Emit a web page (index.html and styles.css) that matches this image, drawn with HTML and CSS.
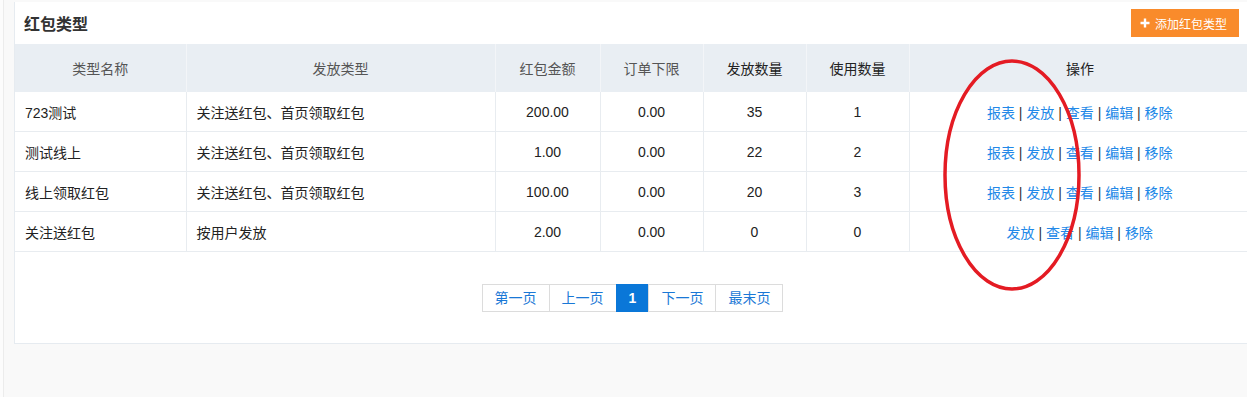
FILE: index.html
```html
<!DOCTYPE html>
<html lang="zh-CN">
<head>
  <meta charset="UTF-8">
  <title>红包类型</title>
  <link rel="stylesheet" href="styles.css">
</head>
<body>
  <div class="layout">
    <div class="side"></div>

    <div class="main">
      <div class="panel">
        <div class="panel-head">
          <h2>红包类型</h2>
          <a class="add-button" href="#">
            <svg width="10" height="10" viewBox="0 0 10 10"><path d="M5 0.5V9.5M0.5 5H9.5" stroke="#fff" stroke-width="2.4"/></svg>
            添加红包类型
          </a>
        </div>

        <table class="list">
          <colgroup>
            <col style="width: 171px">
            <col style="width: 309px">
            <col style="width: 105px">
            <col style="width: 103px">
            <col style="width: 103px">
            <col style="width: 103px">
            <col>
          </colgroup>
          <thead>
            <tr>
              <th class="light">类型名称</th>
              <th class="light">发放类型</th>
              <th class="light">红包金额</th>
              <th class="light">订单下限</th>
              <th>发放数量</th>
              <th>使用数量</th>
              <th>操作</th>
            </tr>
          </thead>
          <tbody>
            <tr>
              <td class="left">723测试</td>
              <td class="left">关注送红包、首页领取红包</td>
              <td>200.00</td>
              <td>0.00</td>
              <td>35</td>
              <td>1</td>
              <td class="ops"><a href="#">报表</a> | <a href="#">发放</a> | <a href="#">查看</a> | <a href="#">编辑</a> | <a href="#">移除</a></td>
            </tr>
            <tr>
              <td class="left">测试线上</td>
              <td class="left">关注送红包、首页领取红包</td>
              <td>1.00</td>
              <td>0.00</td>
              <td>22</td>
              <td>2</td>
              <td class="ops"><a href="#">报表</a> | <a href="#">发放</a> | <a href="#">查看</a> | <a href="#">编辑</a> | <a href="#">移除</a></td>
            </tr>
            <tr>
              <td class="left">线上领取红包</td>
              <td class="left">关注送红包、首页领取红包</td>
              <td>100.00</td>
              <td>0.00</td>
              <td>20</td>
              <td>3</td>
              <td class="ops"><a href="#">报表</a> | <a href="#">发放</a> | <a href="#">查看</a> | <a href="#">编辑</a> | <a href="#">移除</a></td>
            </tr>
            <tr>
              <td class="left">关注送红包</td>
              <td class="left">按用户发放</td>
              <td>2.00</td>
              <td>0.00</td>
              <td>0</td>
              <td>0</td>
              <td class="ops"><a href="#">发放</a> | <a href="#">查看</a> | <a href="#">编辑</a> | <a href="#">移除</a></td>
            </tr>
          </tbody>
        </table>

        <div class="pager">
          <a href="#">第一页</a>
          <a href="#">上一页</a>
          <a href="#" class="current">1</a>
          <a href="#">下一页</a>
          <a href="#">最末页</a>
        </div>
      </div>
    </div>
  </div>

  <!-- hand-drawn mark over the actions column -->
  <svg class="mark" width="150" height="240" viewBox="0 0 150 240">
    <ellipse cx="75" cy="118" rx="67" ry="114" fill="none" stroke="#e41b23" stroke-width="3.5"/>
  </svg>
</body>
</html>
```

FILE: styles.css
```css
html, body {
  margin: 0;
  padding: 0;
  overflow: hidden;
}

body {
  background: #f9f9f9;
  font-family: "Liberation Sans", "Noto Sans CJK SC", sans-serif;
  font-size: 14px;
  color: #222;
  height: 397px;
}

.layout {
  display: flex;
  height: 100%;
}

.side {
  width: 3px;
  background: #fcfcfc;
  border-right: 1px solid #ececec;
  flex-shrink: 0;
}

.main {
  padding: 2px 0 0 10px;
  width: 1238px;
  flex-shrink: 0;
}

.panel {
  background: #fff;
  border: 1px solid #e6ebf0;
  border-top: none;
  height: 342px;
  box-sizing: border-box;
}

.panel-head {
  display: flex;
  align-items: center;
  justify-content: space-between;
  height: 42px;
  padding: 0 12px 0 9px;
}

.panel-head h2 {
  margin: 0;
  font-size: 16px;
  font-weight: bold;
  color: #333;
}

.add-button {
  display: flex;
  align-items: center;
  gap: 5px;
  height: 28px;
  padding: 0 12px 0 9px;
  background: #f98b2b;
  color: #fff;
  font-size: 12px;
  text-decoration: none;
}

.list {
  width: 100%;
  border-collapse: collapse;
  table-layout: fixed;
}

.list th {
  height: 48px;
  padding: 0;
  background: #e9eef3;
  font-weight: normal;
  color: #222;
  border-left: 1px solid #f3f5f8;
}

.list th:first-child {
  border-left: none;
}

.list th.light {
  color: #555;
}

.list td {
  height: 39px;
  padding: 0;
  text-align: center;
  border: 1px solid #e8ecf0;
  border-top: none;
}

.list td:first-child {
  border-left: none;
}

.list td.left {
  text-align: left;
  padding-left: 10px;
}

.ops {
  color: #333;
}

.ops a {
  color: #2188e8;
  text-decoration: none;
}

.pager {
  display: flex;
  justify-content: center;
  margin-top: 32px;
}

.pager a {
  display: block;
  height: 26px;
  line-height: 26px;
  padding: 0 12px;
  border: 1px solid #dcdcdc;
  margin-left: -1px;
  color: #1a78d6;
  text-decoration: none;
}

.pager a.current {
  background: #0a77d8;
  border-color: #0a77d8;
  color: #fff;
  font-weight: bold;
  padding: 0 12px;
}

.mark {
  position: absolute;
  left: 937px;
  top: 57px;
}
```
